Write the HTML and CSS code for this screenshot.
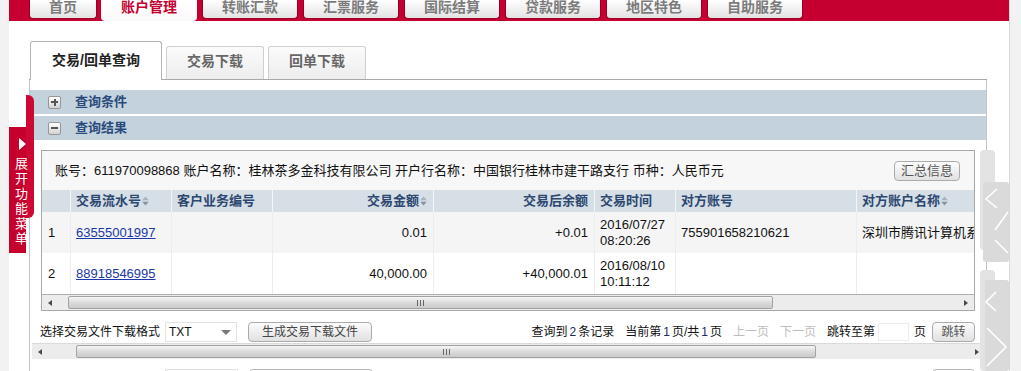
FILE: index.html
```html
<!DOCTYPE html>
<html lang="zh-CN">
<head>
    <meta charset="UTF-8">
    <title>账户管理 - 交易/回单查询</title>
    <link rel="stylesheet" href="styles.css">
</head>
<body>
<div class="page">
    <div class="topnav">
        <div class="nav-tab home">首页</div>
        <div class="nav-tab active">账户管理</div>
        <div class="nav-tab">转账汇款</div>
        <div class="nav-tab">汇票服务</div>
        <div class="nav-tab">国际结算</div>
        <div class="nav-tab">贷款服务</div>
        <div class="nav-tab">地区特色</div>
        <div class="nav-tab">自助服务</div>
    </div>

    <div class="content">
        <div class="subtabs">
            <div class="subtab active">交易/回单查询</div>
            <div class="subtab">交易下载</div>
            <div class="subtab">回单下载</div>
        </div>

        <div class="panel">
            <div class="acc-head"><span class="toggle plus"></span>查询条件</div>
            <div class="acc-head"><span class="toggle"></span>查询结果</div>

            <div class="result">
                <div class="grid-box">
                    <div class="acct-info">
                        <span>账号：611970098868 账户名称：桂林茶多金科技有限公司 开户行名称：中国银行桂林市建干路支行 币种：人民币元</span>
                        <button class="btn summary">汇总信息</button>
                    </div>
                    <div class="grid">
                        <div class="grid-row head">
                            <div class="cell"></div>
                            <div class="cell">交易流水号<svg class="sort" width="7" height="10" viewBox="0 0 7 10"><path d="M3.5 0.5L6.8 4.2H0.2z" fill="#a9b3bd"/><path d="M3.5 9.5L6.8 5.8H0.2z" fill="#8693a0"/></svg></div>
                            <div class="cell">客户业务编号</div>
                            <div class="cell num">交易金额<svg class="sort" width="7" height="10" viewBox="0 0 7 10"><path d="M3.5 0.5L6.8 4.2H0.2z" fill="#a9b3bd"/><path d="M3.5 9.5L6.8 5.8H0.2z" fill="#8693a0"/></svg></div>
                            <div class="cell num">交易后余额</div>
                            <div class="cell">交易时间</div>
                            <div class="cell">对方账号</div>
                            <div class="cell">对方账户名称<svg class="sort" width="7" height="10" viewBox="0 0 7 10"><path d="M3.5 0.5L6.8 4.2H0.2z" fill="#a9b3bd"/><path d="M3.5 9.5L6.8 5.8H0.2z" fill="#8693a0"/></svg></div>
                        </div>
                        <div class="grid-row odd">
                            <div class="cell idx">1</div>
                            <div class="cell"><a href="#">63555001997</a></div>
                            <div class="cell"></div>
                            <div class="cell num">0.01</div>
                            <div class="cell num">+0.01</div>
                            <div class="cell"><span class="two-line">2016/07/27<br>08:20:26</span></div>
                            <div class="cell">755901658210621</div>
                            <div class="cell">深圳市腾讯计算机系统有限公司</div>
                        </div>
                        <div class="grid-row">
                            <div class="cell idx">2</div>
                            <div class="cell"><a href="#">88918546995</a></div>
                            <div class="cell"></div>
                            <div class="cell num">40,000.00</div>
                            <div class="cell num">+40,000.01</div>
                            <div class="cell"><span class="two-line">2016/08/10<br>10:11:12</span></div>
                            <div class="cell"></div>
                            <div class="cell"></div>
                        </div>
                    </div>
                    <div class="hscroll inner">
                        <span class="sb-btn left"><i class="arrow-l"></i></span>
                        <span class="thumb"><i class="grip"></i></span>
                        <span class="sb-btn right"><i class="arrow-r"></i></span>
                    </div>
                </div>

                <div class="toolbar">
                    <span>选择交易文件下载格式</span>
                    <span class="select">TXT<i class="caret"></i></span>
                    <button class="btn make">生成交易下载文件</button>
                    <div class="pager">
                        <span>查询到<b class="n">2</b>条记录</span>
                        <span>当前第<b class="n">1</b>页/共<b class="n">1</b>页</span>
                        <span class="off">上一页</span>
                        <span class="off">下一页</span>
                        <span>跳转至第</span>
                        <span class="page-input"></span>
                        <span>页</span>
                        <button class="btn jump">跳转</button>
                    </div>
                </div>
            </div>

            <div class="hscroll outer">
                <span class="sb-btn left"><i class="arrow-l"></i></span>
                <span class="thumb"><i class="grip"></i></span>
                <span class="sb-btn right"><i class="arrow-r"></i></span>
            </div>

            <div class="ghost-row">
                <span class="ghost sel"></span>
                <span class="ghost make"></span>
                <span class="ghost jump"></span>
            </div>
        </div>
    </div>

    <div class="menu-tab">
        <div class="menu-strip"></div>
        <div class="menu-body"></div>
        <div class="menu-label">
            <i class="menu-arrow"></i>
            <span>展</span><span>开</span><span>功</span><span>能</span><span>菜</span><span>单</span>
        </div>
    </div>

    <svg class="side-nav" width="29" height="221" viewBox="0 0 29 221">
        <rect x="0" y="0" width="15" height="100" rx="4" fill="#e3e3e3"/>
        <rect x="3" y="32" width="26" height="80" rx="3" fill="#dadada"/>
        <polyline points="17,39 6,49 17,58" fill="none" stroke="#fff" stroke-width="1.6"/>
        <line x1="15" y1="80" x2="28" y2="62" stroke="#fff" stroke-width="1.6"/>
        <line x1="15" y1="90" x2="28" y2="103" stroke="#fff" stroke-width="1.6"/>
        <rect x="0" y="120" width="15" height="101" rx="4" fill="#e3e3e3"/>
        <rect x="5" y="130" width="24" height="91" rx="3" fill="#dadada"/>
        <polyline points="16,142 6,152 16,161" fill="none" stroke="#fff" stroke-width="1.6"/>
        <polyline points="7,178 26,197 7,216" fill="none" stroke="#fff" stroke-width="1.6"/>
    </svg>
</div>
</body>
</html>
```

FILE: styles.css
```css
html, body {
    margin: 0;
}

body {
    background: #f2f2f2;
    font-family: "Liberation Sans", "Noto Sans CJK SC", sans-serif;
    font-size: 13px;
    color: #111;
    height: 371px;
    overflow: hidden;
}

.page {
    position: relative;
    margin-left: 9px;
    width: 1001px;
    height: 371px;
    box-sizing: border-box;
    background: #fff;
    border-right: 1px solid #d8d8d8;
    overflow: hidden;
}

/* top navigation */
.topnav {
    display: flex;
    align-items: flex-start;
    gap: 5px;
    height: 21px;
    padding-left: 20px;
    background: #c50030;
}

.nav-tab {
    width: 96px;
    height: 19px;
    box-sizing: border-box;
    background: linear-gradient(#ffffff, #e3e3e3);
    border: 1px solid #9a0024;
    border-top: 0;
    border-radius: 0 0 4px 4px;
    text-align: center;
    font-size: 14px;
    line-height: 14px;
    font-weight: bold;
    color: #7b7b7b;
}

.nav-tab.home {
    width: 68px;
    margin-right: -1px;
}

.nav-tab.active {
    height: 21px;
    border: 0;
    background: linear-gradient(#ffffff, #fafafa);
    color: #c50030;
}

/* sub tabs */
.content {
    margin: 20px 0 0 20px;
    width: 958px;
}

.subtabs {
    display: flex;
    align-items: flex-end;
    gap: 4px;
    height: 38px;
    padding-left: 1px;
    border-bottom: 1px solid #a9a9a9;
}

.subtab {
    width: 98px;
    height: 33px;
    box-sizing: border-box;
    border: 1px solid #cfcfcf;
    border-bottom: 0;
    border-radius: 3px 3px 0 0;
    background: linear-gradient(#fbfbfb, #ededed);
    font-size: 14px;
    font-weight: bold;
    color: #666;
    text-align: center;
    line-height: 29px;
}

.subtab.active {
    width: 132px;
    height: 39px;
    margin-bottom: -1px;
    background: #fff;
    border-color: #b4b4b4;
    color: #222;
    line-height: 37px;
}

/* panel */
.panel {
    height: 292px;
    border-left: 1px solid #c4c4c4;
    border-right: 1px solid #c4c4c4;
    padding-top: 10px;
}

.acc-head {
    display: flex;
    align-items: center;
    height: 24px;
    margin-bottom: 2px;
    padding-left: 18px;
    background: #c4d2dd;
    font-weight: bold;
    color: #2a4a7c;
    line-height: 16px;
}

.toggle {
    position: relative;
    width: 11px;
    height: 11px;
    margin-right: 14px;
    border: 1px solid #979797;
    border-radius: 2px;
    background: linear-gradient(#ffffff, #d2d2d2);
}

.toggle::before {
    content: "";
    position: absolute;
    left: 2px;
    right: 2px;
    top: 4.5px;
    height: 2px;
    background: #555;
}

.toggle.plus::after {
    content: "";
    position: absolute;
    top: 2px;
    bottom: 2px;
    left: 4.5px;
    width: 2px;
    background: #555;
}

.result {
    padding: 8px 11px 0 11px;
}

.grid-box {
    border: 1px solid #a8a8a8;
    background: #f7f7f7;
}

.acct-info {
    display: flex;
    align-items: center;
    justify-content: space-between;
    height: 39px;
    padding: 0 14px 0 13px;
    line-height: 16px;
}

.btn {
    font-family: inherit;
    font-size: 12px;
    color: #444;
    height: 20px;
    padding: 0 6px;
    border: 1px solid #ababab;
    border-radius: 4px;
    background: linear-gradient(#fcfcfc, #e1e1e1);
    line-height: 16px;
}

.btn.summary {
    width: 66px;
    font-size: 13px;
    color: #555;
}

/* grid */
.grid {
    overflow: hidden;
}

.grid-row {
    display: grid;
    grid-template-columns: 29px 101px 101px 161px 161px 81px 181px 181px;
    height: 41px;
    background: #fff;
}

.grid-row.odd {
    background: #f5f5f5;
}

.grid-row.head {
    height: 22px;
    background: #d6dee6;
    font-weight: bold;
    color: #2c4870;
}

.cell {
    display: flex;
    align-items: center;
    padding: 0 5px;
    border-right: 1px solid #ededed;
    white-space: nowrap;
    overflow: hidden;
    line-height: 16px;
}

.head .cell {
    border-right-color: #f3f5f7;
}

.cell.idx {
    padding-left: 6px;
}

.cell.num {
    justify-content: flex-end;
    padding-right: 6px;
}

.cell a {
    color: #1b37a8;
}

.sort {
    margin-left: 1px;
    flex: none;
}

.two-line {
    display: block;
    line-height: 16px;
}

/* scrollbars */
.hscroll {
    display: flex;
    align-items: center;
    height: 15px;
    background: #ececec;
    border-top: 1px solid #b0b0b0;
}

.sb-btn {
    display: flex;
    align-items: center;
    height: 100%;
}

.hscroll.inner .sb-btn.left {
    width: 19px;
    padding-left: 6px;
}

.hscroll.inner .thumb {
    width: 705px;
    margin-left: 1px;
}

.hscroll.inner .sb-btn.right {
    margin-left: auto;
    width: 16px;
    justify-content: center;
}

.thumb {
    display: flex;
    align-items: center;
    justify-content: center;
    height: 13px;
    box-sizing: border-box;
    border: 1px solid #a2a2a2;
    border-radius: 2px;
    background: linear-gradient(#f6f6f6, #d9d9d9 55%, #cacaca);
}

.grip {
    width: 7px;
    height: 6px;
    background: repeating-linear-gradient(90deg, #666 0 1px, transparent 1px 3px);
}

.arrow-l {
    width: 0;
    height: 0;
    border-right: 4px solid #4a4a4a;
    border-top: 3px solid transparent;
    border-bottom: 3px solid transparent;
}

.arrow-r {
    width: 0;
    height: 0;
    border-left: 4px solid #4a4a4a;
    border-top: 3px solid transparent;
    border-bottom: 3px solid transparent;
}

.hscroll.outer {
    width: 951px;
    margin: 0 0 0 2px;
    border-top-color: #dadada;
}

.hscroll.outer .sb-btn.left {
    width: 38px;
    padding-left: 6px;
}

.hscroll.outer .thumb {
    width: 740px;
}

.hscroll.outer .sb-btn.right {
    margin-left: auto;
    width: 8px;
}

/* toolbar */
.toolbar {
    display: flex;
    align-items: center;
    height: 22px;
    margin: 10px 0 0 -1px;
    font-size: 12px;
    line-height: 16px;
    color: #111;
}

.select {
    position: relative;
    width: 72px;
    height: 20px;
    box-sizing: border-box;
    margin-left: 5px;
    padding-left: 3px;
    border: 1px solid #e2e2e2;
    background: #fff;
    line-height: 18px;
}

.caret {
    position: absolute;
    right: 5px;
    top: 7px;
    border-top: 5px solid #7a7a7a;
    border-left: 5px solid transparent;
    border-right: 5px solid transparent;
}

.btn.make {
    width: 124px;
    margin-left: 11px;
}

.pager {
    display: flex;
    align-items: center;
    margin-left: auto;
    gap: 11px;
}

.pager .n {
    font-weight: normal;
    margin: 0 2px;
    color: #1a2a5a;
}

.pager .off {
    color: #bdbdbd;
}

.page-input {
    width: 31px;
    height: 18px;
    box-sizing: border-box;
    margin-left: -8px;
    border: 1px solid #ececec;
    background: #fff;
}

.pager .page-input + span {
    margin-left: -6px;
}

.btn.jump {
    width: 43px;
    margin-left: -5px;
    color: #555;
}

.ghost-row {
    display: flex;
    margin-top: 10px;
}

.ghost {
    height: 20px;
    box-sizing: border-box;
    border: 1px solid #b8b8b8;
    border-radius: 4px;
}

.ghost.sel {
    width: 73px;
    margin-left: 135px;
    border-color: #e2e2e2;
    border-radius: 0;
}

.ghost.make {
    width: 124px;
    margin-left: 11px;
}

.ghost.jump {
    width: 43px;
    margin-left: auto;
    margin-right: 11px;
}

/* floating left menu tab */
.menu-tab {
    position: absolute;
    left: 0;
    top: 95px;
    width: 25px;
    height: 158px;
}

.menu-strip {
    position: absolute;
    left: 17px;
    top: 0;
    width: 8px;
    height: 123px;
    border-radius: 0 6px 6px 0;
    background: #cd0834;
}

.menu-body {
    position: absolute;
    left: 0;
    top: 32px;
    width: 17px;
    height: 126px;
    background: #c6002d;
}

.menu-label {
    position: absolute;
    left: 0;
    top: 43px;
    width: 25px;
    display: flex;
    flex-direction: column;
    align-items: center;
    color: #fff;
    font-size: 13px;
    line-height: 15px;
}

.menu-arrow {
    width: 0;
    height: 0;
    margin: 0 0 6px 2px;
    border-left: 7px solid #fff;
    border-top: 6px solid transparent;
    border-bottom: 6px solid transparent;
}

/* right-side slide buttons */
.side-nav {
    position: absolute;
    left: 971px;
    top: 150px;
}
```
